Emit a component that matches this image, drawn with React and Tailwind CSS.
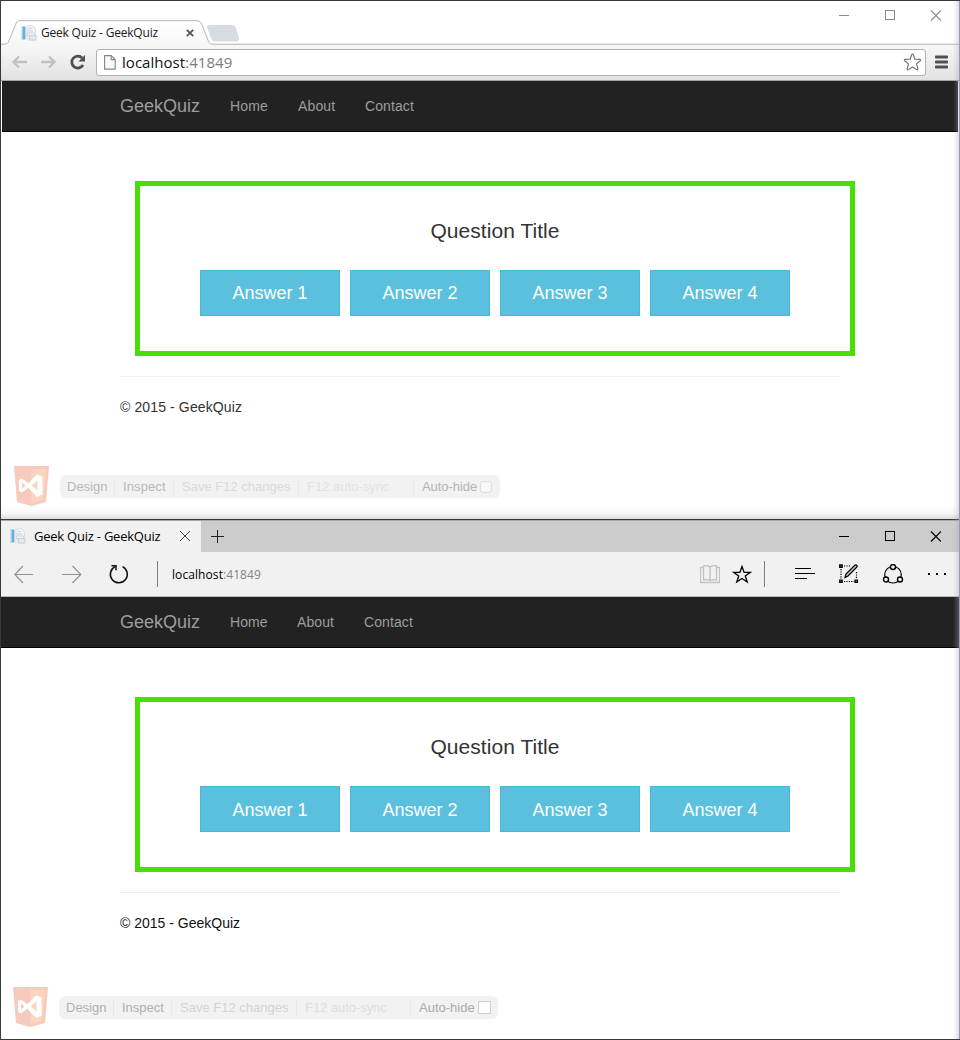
import React from "react";

function Favicon({ className }) {
  return (
    <svg viewBox="0 0 16 16" className={"h-4 w-4 shrink-0 " + className}>
      <path d="M6.500 .8h5.500l2.500 3v11h-8z" fill="#f0f3f7" stroke="#d3d9e2" strokeWidth=".8" />
      <path d="M4.500 1.500h3v13h-3z" fill="#e6eaef" />
      <rect x=".8" y="1.500" width="3.600" height="13" fill="#68aedd" />
      <rect x=".8" y="1.500" width="1.200" height="13" fill="#a5cfeb" />
      <path d="M8 3.500h3M6 6h6" stroke="#ccd3de" strokeWidth="1" />
      <path d="M6.500 8h7v3h-7z" fill="#f3f5f9" stroke="#c6cedb" strokeWidth=".8" />
      <path d="M8.500 10.500h6.500v4.500h-6.500z" fill="#e3e8f0" stroke="#c0c9d7" strokeWidth=".8" />
    </svg>
  );
}

function WindowButtons({ className }) {
  return (
    <svg viewBox="0 0 102 11" className={"h-[11px] w-[102px] shrink-0 " + className} fill="none" stroke="currentColor">
      <path d="M0 5.500h10" />
      <rect x="46.500" y=".5" width="9" height="9" />
      <path d="M92 .5l10 10M102 .5l-10 10" strokeWidth="1.200" />
    </svg>
  );
}

function StudioBadge({ className }) {
  return (
    <svg viewBox="0 0 35 40" className={"h-10 w-[35px] shrink-0 " + className}>
      <path d="M0 0h35l-3 36-14.500 4L3 36z" fill="#f6cabd" />
      <path d="M17.500 3h14.500l-2.700 31-11.800 3z" fill="#fbd5c2" />
      <path
        fillRule="evenodd"
        d="M5 14l3-1.500 6.500 4.800L23 8.200l5.500 2.400v17.800L23 31l-8.500-9.300L8 26.500 5 25zM8 16.300v6.200l3.500-3.100zM23.500 14.600l-5.800 4.900 5.800 4.900z"
        fill="#fff"
      />
    </svg>
  );
}

const answers = ["Answer 1", "Answer 2", "Answer 3", "Answer 4"];

function QuizPage({ barClass, homeClass, aboutClass, labelClass, footerClass }) {
  return (
    <>
      <nav className={"flex h-[51px] shrink-0 items-center border-b border-black bg-[#222] text-sm text-[#9d9d9d] " + barClass}>
        <span className="w-[110px] text-lg leading-5">GeekQuiz</span>
        <span className={homeClass}>Home</span>
        <span className={aboutClass}>About</span>
        <span className="tracking-[0.1px]">Contact</span>
      </nav>
      <main className="pl-[119px]">
        <section className="mt-[49px] ml-[15px] flex h-[175px] w-[720px] flex-col items-center border-[5px] border-[#46e007]">
          <h1 className="mt-[32px] text-[21px] leading-[26px] tracking-[0.05px] text-[#333]">Question Title</h1>
          <div className="mt-[26px] flex gap-2.5">
            {answers.map((a) => (
              <button key={a} className={"h-[46px] w-[140px] border border-[#46b8da] bg-[#5bc0de] text-lg leading-6 text-white " + labelClass}>
                {a}
              </button>
            ))}
          </div>
        </section>
        <hr className="mt-5 w-[720px] border-[#eee]" />
        <p className={footerClass}>© 2015 - GeekQuiz</p>
      </main>
    </>
  );
}

function ChromeWindow() {
  return (
    <section className="flex h-[519px] flex-col overflow-hidden border-t border-l border-[#3b393b] bg-white">
      <header className="relative flex h-[43px] shrink-0">
        <svg viewBox="0 0 960 44" className="absolute top-0 left-0 h-[44px] w-[960px]">
          <defs>
            <linearGradient id="tab" x1="0" y1="0" x2="0" y2="1">
              <stop offset="0" stopColor="#fff" />
              <stop offset="1" stopColor="#f7f7f7" />
            </linearGradient>
          </defs>
          <path d="M0 43.200h3c3 0 4-1 5-3.500l6.500-16c1-2.700 2-4 4.500-4h177c2.500 0 4 1.300 5 4l6 15.500c1 3 2.500 4 5 4H960" fill="url(#tab)" stroke="#b4b4b4" />
          <path d="M208 24.500h23c2 0 3 .8 3.500 2.500l3 10c.5 2-.3 3-2 3h-21c-2 0-3-.8-3.800-2.500l-4-10.500c-.6-2 0-2.500 1.300-2.500z" fill="#d7dce4" stroke="#d0d3d8" strokeWidth=".7" />
        </svg>
        <div className="relative flex h-full w-full items-start">
          <Favicon className="mt-6 ml-5" />
          <span className="mt-6 ml-1 w-[145px] font-['Open_Sans','Noto_Sans',sans-serif] text-xs leading-4 tracking-[-0.2px] text-[#222]">Geek Quiz - GeekQuiz</span>
          <svg viewBox="0 0 8 8" className="mt-7 h-2 w-2" stroke="#505050" strokeWidth="1.700">
            <path d="M.8.8l6.400 6.400M7.200.8L.8 7.200" />
          </svg>
          <WindowButtons className="mt-[9px] ml-[645px] text-[#8c8c8c]" />
        </div>
      </header>
      <div className="flex h-[37px] shrink-0 items-center border-b border-[#a4a4a4] bg-linear-to-b from-[#f8f8f8] to-[#e2e2e2] pl-[11px]">
        <svg viewBox="0 0 75 16" className="h-4 w-[75px] shrink-0" fill="none" strokeWidth="2.300">
          <path d="M7 2.500L1.500 8l5.500 5.500M2 8h13" stroke="#c1c1c1" />
          <path d="M37 2.500l5.500 5.500-5.500 5.500M42.500 8H29" stroke="#c1c1c1" />
          <path d="M71 11a6 6 0 1 1-.8-7" stroke="#4f4f4f" strokeWidth="2.700" />
          <path d="M73 1v6.500h-6.500z" fill="#4f4f4f" />
        </svg>
        <div className="ml-[9px] flex h-[27px] w-[830px] items-center rounded-[3px] border border-[#b1b1b1] bg-white pl-[7px]">
          <svg viewBox="0 0 12 16" className="h-4 w-3" fill="#fafafa" stroke="#858585" strokeWidth="1.100">
            <path d="M.6 1.600h6.600l4 4v9.500H.6zM7.200 1.600v4h4" />
          </svg>
          <span className="ml-1.5 w-[780px] font-['Open_Sans','Noto_Sans',sans-serif] text-[15px] leading-5 tracking-[0.04px] text-[#111]">
            localhost<span className="text-[#7b7b7b]">:41849</span>
          </span>
          <svg viewBox="0 0 20 20" className="h-5 w-5 shrink-0" fill="none" stroke="#777" strokeWidth="1.200" strokeLinejoin="round">
            <path d="M10.500 2c.5 0 .7.400.9 1l1.500 4.200 4.600.2c1.300.1 1.500.9.600 1.600l-3.600 2.900 1.300 4.600c.3 1.200-.3 1.600-1.300 1l-4-2.500-4 2.500c-1 .6-1.600.2-1.300-1l1.300-4.600L2.900 9c-.9-.7-.7-1.500.6-1.600l4.600-.2L9.600 3c.2-.6.4-1 .9-1z" />
          </svg>
        </div>
        <svg viewBox="0 0 14 14" className="ml-[9px] h-3.5 w-3.5 shrink-0" fill="#505050">
          <rect y=".500" width="13" height="3" rx=".8" />
          <rect y="5.500" width="13" height="3" rx=".8" />
          <rect y="10.500" width="13" height="3" rx=".8" />
        </svg>
      </div>
      <QuizPage
        barClass="mr-[2px] ml-px pl-[118px]"
        homeClass="w-[68px] tracking-[0.15px]"
        aboutClass="w-[67px] tracking-[0.15px]"
        labelClass="pb-px"
        footerClass="mt-5 text-sm leading-5 tracking-[0.12px] text-[#333]"
      />
      <div className="mt-[49px] ml-[13px] flex">
        <StudioBadge className="" />
        <div className="mt-[9px] ml-[11px] flex h-[23px] w-[440px] items-center rounded-md bg-[#f2f2f2] text-[13px] leading-4 whitespace-nowrap">
          <span className="w-[55px] border-r border-[#e8e8e8] pl-[7px] text-[#b9b9b9]">Design</span>
          <span className="w-[59px] border-r border-[#e8e8e8] pl-2 tracking-[0.1px] text-[#b9b9b9]">Inspect</span>
          <span className="w-[125px] border-r border-[#e8e8e8] pl-2 text-[#dadada]">Save F12 changes</span>
          <span className="w-[115px] border-r border-[#e8e8e8] pl-2 text-[#e2e2e2]">F12 auto-sync</span>
          <span className="w-[66px] pl-2 tracking-[-0.05px] text-[#b5b5b5]">Auto-hide</span>
          <i className="h-3 w-3 rounded-[3px] border border-[#dedede] bg-[#f7f7f7]" />
        </div>
      </div>
      <div className="mt-auto h-3.5 shrink-0 bg-linear-to-b from-white via-[#f7f7f7] to-[#d8d8d8]" />
    </section>
  );
}

function EdgeWindow() {
  return (
    <section className="flex h-[521px] flex-col overflow-hidden border-y border-l border-[#3b393b] bg-white">
      <header className="flex h-8 shrink-0 items-center bg-[#ccc] shadow-[inset_0_1px_#a8a8a8]">
        <div className="mt-px flex h-[31px] w-[200px] items-center bg-[#f1f1f1] pl-[9px]">
          <Favicon className="mb-px" />
          <span className="mb-0.5 ml-2 w-[146px] font-['Open_Sans','Noto_Sans',sans-serif] text-[13px] leading-4 tracking-[-0.23px] text-black">Geek Quiz - GeekQuiz</span>
          <svg viewBox="0 0 10 10" className="mb-0.5 h-2.5 w-2.5 shrink-0" stroke="#444">
            <path d="M0 0l10 10M10 0L0 10" />
          </svg>
        </div>
        <svg viewBox="0 0 13 13" className="ml-2.5 h-[13px] w-[13px]" stroke="#222">
          <path d="M6.500 0v13M0 6.500h13" />
        </svg>
        <WindowButtons className="ml-[615px] text-black" />
      </header>
      <div className="flex h-[45px] shrink-0 items-center border-b border-[#bbb] bg-[#f1f1f1] pl-[13px]">
        <svg viewBox="0 0 116 20" className="h-5 w-[116px] shrink-0" fill="none" stroke="#929292" strokeWidth="1.200">
          <path d="M9 2L.8 10.500 9 19M.8 10.500H19" />
          <path d="M58.500 2l8.300 8.500-8.300 8.500M66.800 10.500H48" />
          <path d="M101 2.700a8.500 8.500 0 1 0 7.500-.1" stroke="#111" strokeWidth="1.500" />
          <path d="M97.500 1.700h4.500v4.500" stroke="#111" strokeWidth="1.500" />
        </svg>
        <i className="ml-[27px] h-[26px] w-px bg-[#808080]" />
        <span className="mt-0.5 ml-3.5 w-[528px] font-['Open_Sans','Noto_Sans',sans-serif] text-[12px] leading-4 tracking-[0.08px] text-black">
          localhost<span className="text-[#858585]">:41849</span>
        </span>
        <svg viewBox="0 0 20 20" className="h-5 w-5 shrink-0" fill="none" stroke="#c1c1c1" strokeWidth="1.300">
          <path d="M10 3C8 1.500 5.500 1.500 3.500 2v14c2-.5 4.500-.3 6.500.5 2-.8 4.500-1 6.500-.5V2c-2-.5-4.500-.5-6.500 1zM10 3v14M3.500 3.500h-3v15h19v-15h-3" />
        </svg>
        <svg viewBox="0 0 20 20" className="ml-3 h-5 w-5 shrink-0" fill="none" stroke="#000" strokeWidth="1.300">
          <path d="M10 2.500l2.100 5.900h6.200l-5 3.600 1.900 6L10 14.500 4.800 18l1.900-6-5-3.600h6.200z" />
        </svg>
        <i className="ml-3 h-[26px] w-px shrink-0 bg-[#808080]" />
        <svg viewBox="0 0 153 20" className="ml-[30px] h-5 w-[153px] shrink-0" fill="none" stroke="#000" strokeWidth="1.200">
          <path d="M0 4.500h16M0 9.500h20M0 14.500h12" />
          <g transform="translate(44 0)">
            <path d="M5 2h7M2 5v10M5 17.500h10M17.500 8v7" strokeDasharray="1.200 1.200" />
            <path d="M.7.9h2.500v2.500H.7zM.7 16h2.500v2.500H.7zM16 16h2.500v2.500H16z" fill="#555" />
            <path d="M6 13.500l1-3.500 9-9c1.500-.5 2.500.5 2 2l-9 9z" fill="#bbb" />
          </g>
          <g transform="translate(88 0)">
            <circle cx="10" cy="10.700" r="8.300" />
            <g fill="#f1f1f1" strokeWidth="1.400">
              <circle cx="10" cy="3" r="2.500" />
              <circle cx="3" cy="15.500" r="2.500" />
              <circle cx="17" cy="15.500" r="2.500" />
            </g>
          </g>
          <path d="M133 9h2v2h-2zM141 9h2v2h-2zM149 9h2v2h-2z" fill="#000" stroke="none" />
        </svg>
      </div>
      <QuizPage
        barClass="pl-[119px]"
        homeClass="w-[67px] tracking-[0.1px]"
        aboutClass="w-[67px] tracking-[0.1px]"
        labelClass="pt-px"
        footerClass="mt-5 text-sm leading-5 text-[#111]"
      />
      <div className="mt-[54px] ml-3 flex">
        <StudioBadge className="" />
        <div className="mt-[9px] ml-[11px] flex h-[23px] w-[439px] items-center rounded-md bg-[#f2f2f2] text-[13px] leading-4 whitespace-nowrap">
          <span className="w-[55px] border-r border-[#e8e8e8] pl-[7px] text-[#b0b0b0]">Design</span>
          <span className="w-[58px] border-r border-[#e8e8e8] pl-2 text-[#b0b0b0]">Inspect</span>
          <span className="w-[125px] border-r border-[#e8e8e8] pl-2 text-[#d3d3d3]">Save F12 changes</span>
          <span className="w-[114px] border-r border-[#e8e8e8] pl-2 tracking-[-0.05px] text-[#dedede]">F12 auto-sync</span>
          <span className="w-[67px] pl-2 text-[#aaa]">Auto-hide</span>
          <i className="h-[13px] w-[13px] border border-[#cfcfcf] bg-white" />
        </div>
      </div>
    </section>
  );
}

export default function App() {
  return (
    <div className="relative h-[1040px] w-[960px] overflow-hidden bg-white font-['Liberation_Sans',Arial,sans-serif]">
      <ChromeWindow />
      <EdgeWindow />
      <div className="pointer-events-none absolute top-px right-0 bottom-px w-[7px] border-r border-[#969bad] bg-linear-to-r from-transparent to-[#a5a9bd]/35" />
    </div>
  );
}
